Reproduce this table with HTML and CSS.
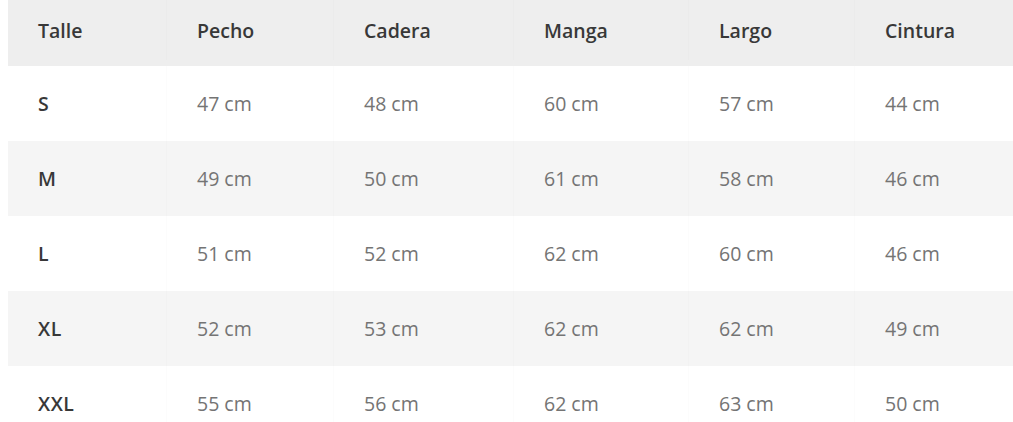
FILE: index.html
```html
<!DOCTYPE html>
<html lang="es">
<head>
<meta charset="utf-8">
<link rel="stylesheet" href="styles.css">
</head>
<body>
<div class="table">
  <div class="row head">
    <div class="cell">Talle</div><div class="cell">Pecho</div><div class="cell">Cadera</div><div class="cell">Manga</div><div class="cell">Largo</div><div class="cell">Cintura</div>
  </div>
  <div class="row">
    <div class="cell size">S</div><div class="cell">47 cm</div><div class="cell">48 cm</div><div class="cell">60 cm</div><div class="cell">57 cm</div><div class="cell">44 cm</div>
  </div>
  <div class="row alt">
    <div class="cell size">M</div><div class="cell">49 cm</div><div class="cell">50 cm</div><div class="cell">61 cm</div><div class="cell">58 cm</div><div class="cell">46 cm</div>
  </div>
  <div class="row">
    <div class="cell size">L</div><div class="cell">51 cm</div><div class="cell">52 cm</div><div class="cell">62 cm</div><div class="cell">60 cm</div><div class="cell">46 cm</div>
  </div>
  <div class="row alt">
    <div class="cell size">XL</div><div class="cell">52 cm</div><div class="cell">53 cm</div><div class="cell">62 cm</div><div class="cell">62 cm</div><div class="cell">49 cm</div>
  </div>
  <div class="row">
    <div class="cell size">XXL</div><div class="cell">55 cm</div><div class="cell">56 cm</div><div class="cell">62 cm</div><div class="cell">63 cm</div><div class="cell">50 cm</div>
  </div>
</div>
</body>
</html>
```
FILE: styles.css
```css
html, body {
  margin: 0;
  padding: 0;
  background: #fff;
  overflow: hidden;
}
.table {
  margin-left: 8px;
  width: 1005px;
  font-family: "Open Sans", sans-serif;
  font-size: 19.5px;
  color: #747474;
}
.row {
  display: grid;
  grid-template-columns: 158px 167px 180px 175px 166px 159px;
  height: 75px;
  align-items: center;
}
.row.head {
  height: 66px;
  background: #eeeeee;
  color: #383838;
  font-weight: 600;
  padding-bottom: 6px;
  box-sizing: border-box;
}
.row.alt {
  background: #f5f5f5;
}
.cell {
  padding-left: 30px;
  height: 100%;
  display: flex;
  align-items: center;
  border-left: 1px solid rgba(0,0,0,0.012);
}
.cell:first-child {
  border-left: none;
}
.cell.size {
  color: #383838;
  font-weight: 600;
  letter-spacing: 0.5px;
}
```
